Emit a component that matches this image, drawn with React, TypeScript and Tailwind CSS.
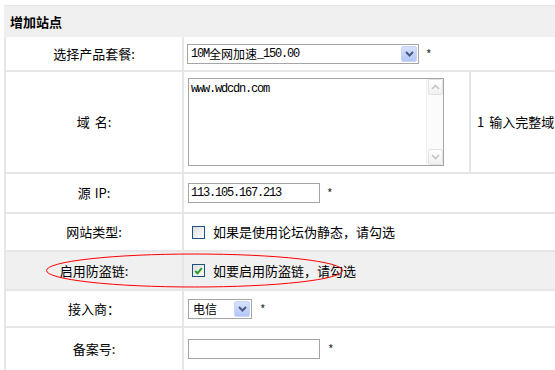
import React from "react";

const mono = "font-['Liberation_Mono','Noto_Sans_CJK_SC',monospace] tracking-[-1.2px]";

function Chevron() {
  return (
    <svg width="9" height="6" viewBox="0 0 9 6">
      <path d="M1 1 L4.5 4.5 L8 1" fill="none" stroke="#4b5b80" strokeWidth="2" />
    </svg>
  );
}

function SelectBtn() {
  return (
    <div className="absolute right-[1px] top-[1px] bottom-[1px] w-[16px] flex items-center justify-center rounded-[2px] border border-[#c6d4f7] bg-gradient-to-b from-[#d6e1fd] to-[#b3c6f7]">
      <Chevron />
    </div>
  );
}

function Star({ ml }: { ml: string }) {
  return <span className={`${ml} text-[12px] text-[#333] leading-none`}>*</span>;
}

function Checkbox({ checked }: { checked?: boolean }) {
  return (
    <div className="w-[13px] h-[13px] border border-[#1c5180] bg-gradient-to-br from-[#dcdcdc] to-white flex items-center justify-center shrink-0">
      {checked && (
        <svg width="9" height="8" viewBox="0 0 9 8">
          <path d="M1.2 4 L3.5 6.3 L7.8 1.2" fill="none" stroke="#21a121" strokeWidth="2" />
        </svg>
      )}
    </div>
  );
}

function ScrollArrow({ up }: { up?: boolean }) {
  return (
    <div className="w-[15px] h-[16px] mx-auto border border-[#e2e2e2] rounded-[2px] bg-gradient-to-b from-white to-[#f1f1f1] flex items-center justify-center">
      <svg width="9" height="6" viewBox="0 0 9 6">
        <path d={up ? "M1 5 L4.5 1.5 L8 5" : "M1 1 L4.5 4.5 L8 1"} fill="none" stroke="#c4c4c4" strokeWidth="1.6" />
      </svg>
    </div>
  );
}

export default function App() {
  return (
    <div className="relative w-[555px] h-[370px] overflow-hidden bg-white font-['Noto_Sans_CJK_SC',sans-serif] text-[13px] text-black">
      <div className="ml-[4px] mt-[5px] w-[700px]">
        <div className="h-[32px] bg-[#f0f0f0] border-t border-[#e6e6e6] flex items-center pl-[6px] font-bold text-[13px]">
          增加站点
        </div>
        <div className="grid grid-cols-[176px_285px_1fr] grid-rows-[33px_100px_38px_36px_37px_35px_42px] gap-[2px] bg-[#e6e6e6] pl-[2px]">
          {/* row 1 */}
          <div className="bg-white flex items-center justify-center">选择产品套餐:</div>
          <div className="col-span-2 bg-white flex items-center pl-[3px]">
            <div className="relative w-[232px] h-[20px] border border-[#a5a5a5] bg-white flex items-center pl-[3px] text-[12px]">
              <span className={mono}>10M</span>
              <span>全网加速</span>
              <span className={mono}>_150.00</span>
              <SelectBtn />
            </div>
            <Star ml="ml-[7px]" />
          </div>

          {/* row 2 */}
          <div className="bg-white flex items-center justify-center">
            域<span className="ml-[5px]">名:</span>
          </div>
          <div className="bg-white flex items-center pl-[4px]">
            <div className="w-[256px] h-[88px] border border-[#a5a5a5] bg-white flex">
              <div className={`flex-1 pl-[2px] pt-[2px] text-[12px] leading-[16px] ${mono}`}>www.wdcdn.com</div>
              <div className="w-[17px] border-l border-[#f0f0f0] bg-[#fbfbfb] flex flex-col justify-between py-[0px]">
                <ScrollArrow up />
                <ScrollArrow />
              </div>
            </div>
          </div>
          <div className="bg-white flex items-center pl-[6px] whitespace-nowrap">
            <span className="mr-[5px]">1</span>输入完整域名，如：www.wdcdn.com
          </div>

          {/* row 3 */}
          <div className="bg-white flex items-center justify-center">
            源<span className="ml-[4px]">IP:</span>
          </div>
          <div className="col-span-2 bg-white flex items-center pl-[4px]">
            <div className={`w-[132px] h-[20px] border border-[#a5a5a5] bg-white flex items-center pl-[2px] text-[12px] ${mono}`}>
              113.105.167.213
            </div>
            <Star ml="ml-[7px]" />
          </div>

          {/* row 4 */}
          <div className="bg-white flex items-center justify-center">网站类型:</div>
          <div className="col-span-2 bg-white flex items-center pl-[8px] gap-[8px]">
            <Checkbox />
            <span>如果是使用论坛伪静态，请勾选</span>
          </div>

          {/* row 5 */}
          <div className="bg-[#f0f0f0] flex items-center justify-center">启用防盗链:</div>
          <div className="col-span-2 bg-[#f0f0f0] flex items-center pl-[8px] gap-[8px]">
            <Checkbox checked />
            <span>如要启用防盗链，请勾选</span>
          </div>

          {/* row 6 */}
          <div className="bg-white flex items-center justify-center">接入商：</div>
          <div className="col-span-2 bg-white flex items-center pl-[4px]">
            <div className="relative w-[64px] h-[20px] border border-[#a5a5a5] bg-white flex items-center pl-[4px] text-[12px]">
              电信
              <SelectBtn />
            </div>
            <Star ml="ml-[8px]" />
          </div>

          {/* row 7 */}
          <div className="bg-white flex items-center justify-center">备案号:</div>
          <div className="col-span-2 bg-white flex items-center pl-[4px]">
            <div className="w-[132px] h-[20px] border border-[#a5a5a5] bg-white" />
            <Star ml="ml-[8px]" />
          </div>
        </div>
      </div>
      <svg className="absolute left-0 top-0 pointer-events-none" width="555" height="370">
        <ellipse cx="194.5" cy="270.5" rx="148" ry="16.5" fill="none" stroke="#ff0000" strokeWidth="1" />
      </svg>
    </div>
  );
}
